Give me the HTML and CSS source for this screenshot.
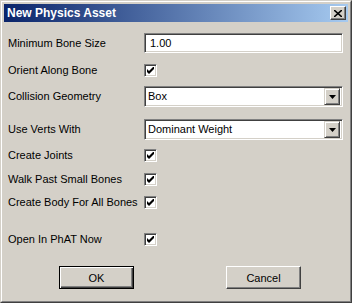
FILE: index.html
```html
<!DOCTYPE html>
<html lang="en">
<head>
  <meta charset="UTF-8">
  <title>New Physics Asset</title>
  <link rel="stylesheet" href="styles.css">
</head>
<body>
  <div class="window">
    <div class="frame">
      <div class="titlebar">
        <span class="title">New Physics Asset</span>
        <span class="close-btn">
          <svg width="8" height="7" viewBox="0 0 8 7"><path d="M0 0 L8 7 M8 0 L0 7" stroke="#000" stroke-width="1.6"/></svg>
        </span>
      </div>

      <div class="content">
        <div class="row row-first">
          <span class="label">Minimum Bone Size</span>
          <div class="textbox">1.00</div>
        </div>

        <div class="row row-check1">
          <span class="label">Orient Along Bone</span>
          <span class="checkbox"><svg width="7" height="7" viewBox="0 0 7 7"><path d="M0 2 L2 4 L7 -1 L7 2 L2 7 L0 5 Z" fill="#000"/></svg></span>
        </div>

        <div class="row row-combo1">
          <span class="label">Collision Geometry</span>
          <div class="combo">
            <span class="combo-text">Box</span>
            <span class="drop-btn"><svg width="7" height="4" viewBox="0 0 7 4"><path d="M0 0 H7 L3.5 4 Z" fill="#000"/></svg></span>
          </div>
        </div>

        <div class="row row-combo2">
          <span class="label">Use Verts With</span>
          <div class="combo">
            <span class="combo-text">Dominant Weight</span>
            <span class="drop-btn"><svg width="7" height="4" viewBox="0 0 7 4"><path d="M0 0 H7 L3.5 4 Z" fill="#000"/></svg></span>
          </div>
        </div>

        <div class="row row-check2">
          <span class="label">Create Joints</span>
          <span class="checkbox"><svg width="7" height="7" viewBox="0 0 7 7"><path d="M0 2 L2 4 L7 -1 L7 2 L2 7 L0 5 Z" fill="#000"/></svg></span>
        </div>

        <div class="row row-check3">
          <span class="label">Walk Past Small Bones</span>
          <span class="checkbox"><svg width="7" height="7" viewBox="0 0 7 7"><path d="M0 2 L2 4 L7 -1 L7 2 L2 7 L0 5 Z" fill="#000"/></svg></span>
        </div>

        <div class="row row-check4">
          <span class="label">Create Body For All Bones</span>
          <span class="checkbox"><svg width="7" height="7" viewBox="0 0 7 7"><path d="M0 2 L2 4 L7 -1 L7 2 L2 7 L0 5 Z" fill="#000"/></svg></span>
        </div>

        <div class="row row-check5">
          <span class="label">Open In PhAT Now</span>
          <span class="checkbox"><svg width="7" height="7" viewBox="0 0 7 7"><path d="M0 2 L2 4 L7 -1 L7 2 L2 7 L0 5 Z" fill="#000"/></svg></span>
        </div>

        <div class="buttons">
          <button class="btn btn-default"><span>OK</span></button>
          <button class="btn"><span>Cancel</span></button>
        </div>
      </div>
    </div>
  </div>
</body>
</html>
```

FILE: styles.css
```css
body {
  margin: 0;
  font-family: "Liberation Sans", Arial, sans-serif;
  font-size: 11px;
  color: #000;
  background: #d4d0c8;
}
.window {
  width: 352px;
  height: 303px;
  box-sizing: border-box;
  border: 1px solid;
  border-color: #d4d0c8 #404040 #404040 #d4d0c8;
  background: #d4d0c8;
}
.frame {
  height: 100%;
  box-sizing: border-box;
  border: 1px solid;
  border-color: #fff #808080 #808080 #fff;
  padding: 2px;
}
.titlebar {
  height: 18px;
  display: flex;
  align-items: center;
  justify-content: space-between;
  padding: 0 2px 0 2px;
  background: linear-gradient(to right, #0a246a, #a6caf0);
}
.title {
  color: #fff;
  font-weight: bold;
  font-size: 12px;
  padding-left: 1px;
}
.close-btn {
  width: 16px;
  height: 14px;
  box-sizing: border-box;
  display: flex;
  align-items: center;
  justify-content: center;
  background: #d4d0c8;
  border: 1px solid;
  border-color: #fff #404040 #404040 #fff;
  box-shadow: inset -1px -1px #808080;
}
.content {
  padding-left: 4px;
}
.row {
  display: grid;
  grid-template-columns: 136px 199px;
  align-items: center;
  line-height: 13px;
}
.row-first { margin-top: 11px; height: 20px; }
.row-check1 { margin-top: 11px; height: 13px; }
.row-combo1 { margin-top: 9px; height: 21px; }
.row-combo2 { margin-top: 12px; height: 21px; }
.row-check2 { margin-top: 9px; height: 13px; }
.row-check3 { margin-top: 11px; height: 13px; }
.row-check4 { margin-top: 10px; height: 13px; }
.row-check5 { margin-top: 24px; height: 13px; }

.textbox, .combo, .checkbox {
  box-sizing: border-box;
  background: #fff;
  border: 1px solid;
  border-color: #808080 #fff #fff #808080;
  box-shadow: inset 1px 1px #404040, inset -1px -1px #d4d0c8;
}
.textbox {
  height: 20px;
  padding: 0 5px;
  line-height: 18px;
}
.combo {
  height: 21px;
  display: flex;
  align-items: center;
  justify-content: space-between;
  padding: 2px;
}
.combo-text {
  padding-left: 1px;
}
.drop-btn {
  width: 16px;
  height: 17px;
  box-sizing: border-box;
  display: flex;
  align-items: center;
  justify-content: center;
  background: #d4d0c8;
  border: 1px solid;
  border-color: #d4d0c8 #404040 #404040 #d4d0c8;
  box-shadow: inset 1px 1px #fff, inset -1px -1px #808080;
}
.checkbox {
  width: 13px;
  height: 13px;
  display: flex;
  align-items: center;
  justify-content: center;
}
.buttons {
  display: flex;
  gap: 92px;
  margin-top: 20px;
  padding-left: 51px;
}
.btn {
  width: 75px;
  height: 23px;
  box-sizing: border-box;
  padding: 0;
  font: inherit;
  color: #000;
  background: #d4d0c8;
  border: 1px solid;
  border-color: #fff #404040 #404040 #fff;
  box-shadow: inset -1px -1px #808080;
}
.btn-default {
  border: 1px solid #000;
  box-shadow: inset 1px 1px #fff, inset -1px -1px #404040, inset -2px -2px #808080;
}
```
